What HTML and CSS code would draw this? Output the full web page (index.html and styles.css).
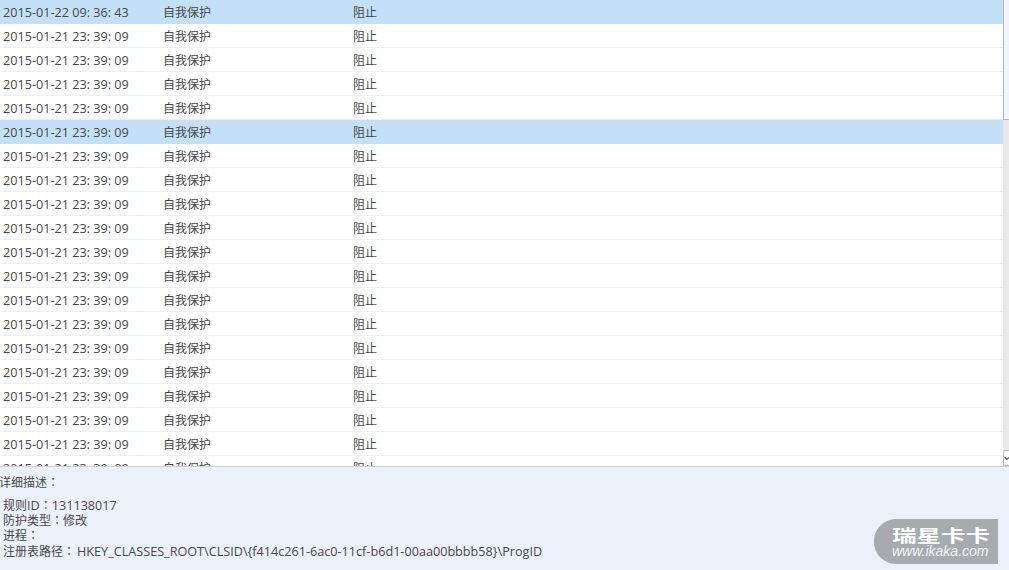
FILE: index.html
```html
<!DOCTYPE html>
<html lang="zh">
<head>
<meta charset="utf-8">
<title>日志</title>
<link rel="stylesheet" href="styles.css">
</head>
<body>
<div class="list-area">
  <div class="rows">
    <div class="row sel"><span class="c-time">2015-01-22 09: 36: 43</span><span class="c-type">自我保护</span><span class="c-act">阻止</span></div>
    <div class="row"><span class="c-time">2015-01-21 23: 39: 09</span><span class="c-type">自我保护</span><span class="c-act">阻止</span></div>
    <div class="row"><span class="c-time">2015-01-21 23: 39: 09</span><span class="c-type">自我保护</span><span class="c-act">阻止</span></div>
    <div class="row"><span class="c-time">2015-01-21 23: 39: 09</span><span class="c-type">自我保护</span><span class="c-act">阻止</span></div>
    <div class="row"><span class="c-time">2015-01-21 23: 39: 09</span><span class="c-type">自我保护</span><span class="c-act">阻止</span></div>
    <div class="row sel"><span class="c-time">2015-01-21 23: 39: 09</span><span class="c-type">自我保护</span><span class="c-act">阻止</span></div>
    <div class="row"><span class="c-time">2015-01-21 23: 39: 09</span><span class="c-type">自我保护</span><span class="c-act">阻止</span></div>
    <div class="row"><span class="c-time">2015-01-21 23: 39: 09</span><span class="c-type">自我保护</span><span class="c-act">阻止</span></div>
    <div class="row"><span class="c-time">2015-01-21 23: 39: 09</span><span class="c-type">自我保护</span><span class="c-act">阻止</span></div>
    <div class="row"><span class="c-time">2015-01-21 23: 39: 09</span><span class="c-type">自我保护</span><span class="c-act">阻止</span></div>
    <div class="row"><span class="c-time">2015-01-21 23: 39: 09</span><span class="c-type">自我保护</span><span class="c-act">阻止</span></div>
    <div class="row"><span class="c-time">2015-01-21 23: 39: 09</span><span class="c-type">自我保护</span><span class="c-act">阻止</span></div>
    <div class="row"><span class="c-time">2015-01-21 23: 39: 09</span><span class="c-type">自我保护</span><span class="c-act">阻止</span></div>
    <div class="row"><span class="c-time">2015-01-21 23: 39: 09</span><span class="c-type">自我保护</span><span class="c-act">阻止</span></div>
    <div class="row"><span class="c-time">2015-01-21 23: 39: 09</span><span class="c-type">自我保护</span><span class="c-act">阻止</span></div>
    <div class="row"><span class="c-time">2015-01-21 23: 39: 09</span><span class="c-type">自我保护</span><span class="c-act">阻止</span></div>
    <div class="row"><span class="c-time">2015-01-21 23: 39: 09</span><span class="c-type">自我保护</span><span class="c-act">阻止</span></div>
    <div class="row"><span class="c-time">2015-01-21 23: 39: 09</span><span class="c-type">自我保护</span><span class="c-act">阻止</span></div>
    <div class="row"><span class="c-time">2015-01-21 23: 39: 09</span><span class="c-type">自我保护</span><span class="c-act">阻止</span></div>
    <div class="row"><span class="c-time">2015-01-21 23: 39: 09</span><span class="c-type">自我保护</span><span class="c-act">阻止</span></div>
  </div>
  <div class="scrollbar">
    <div class="thumb"></div>
    <div class="track"></div>
    <div class="arrow"><svg width="6" height="5" viewBox="0 0 6 5"><path d="M0.5 1 L3 3.5 L5.5 1" fill="none" stroke="#555" stroke-width="1.2"/></svg></div>
  </div>
</div>
<div class="detail">
  <div class="detail-title">详细描述<span class="colon" lang="zh-Hant">：</span></div>
  <div class="detail-body">
    <div>规则<span class="lat">ID</span><span class="colon" lang="zh-Hant">：</span><span class="lat">131138017</span></div>
    <div>防护类型<span class="colon" lang="zh-Hant">：</span>修改</div>
    <div>进程<span class="colon" lang="zh-Hant">：</span></div>
    <div>注册表路径<span class="colon" lang="zh-Hant">：</span><span class="lat path">HKEY_CLASSES_ROOT\CLSID\{f414c261-6ac0-11cf-b6d1-00aa00bbbb58}\ProgID</span></div>
  </div>
  <div class="badge">
    <div class="badge-cn">瑞星卡卡</div>
    <div class="badge-url">www.ikaka.com</div>
  </div>
</div>
</body>
</html>
```
FILE: styles.css
```css
html, body { margin: 0; padding: 0; }
body {
  width: 1009px;
  height: 570px;
  overflow: hidden;
  background: #eaf1fb;
  font-family: "Open Sans", "Noto Sans CJK SC", sans-serif;
  font-size: 12px;
  color: #484848;
}
.list-area {
  display: flex;
  height: 467px;
  background: #fff;
  border-bottom: 1px solid #ccd3dc;
  box-sizing: border-box;
  overflow: hidden;
}
.rows { width: 1003px; flex: none; }
.row {
  display: flex;
  height: 24px;
  line-height: 25px;
  box-sizing: border-box;
  border-bottom: 1px solid #eeeeee;
  padding-left: 3px;
}
.row.sel { background: #c3e0f7; border-bottom-color: #c3e0f7; }
.c-time { width: 160px; flex: none; font-size: 12.65px; }
.c-type { width: 190px; flex: none; }
.c-act { flex: none; }
.scrollbar { flex: 1; display: flex; flex-direction: column; background: #e9e9e9; }
.thumb {
  height: 120px;
  background: #f1f4fc;
  border-left: 1px solid #b5b9bf;
  border-bottom: 1px solid #b5b9bf;
  box-sizing: border-box;
}
.track { flex: 1; }
.arrow {
  height: 16px;
  display: flex;
  align-items: center;
  justify-content: center;
  background: #fff;
  border: 1px solid #b5b9bf;
  border-right: 0;
  box-sizing: border-box;
  border-radius: 2px 0 0 2px;
  overflow: hidden;
}
.arrow svg { flex: none; }
.detail { position: relative; height: 104px; }
.detail-title { padding-top: 8px; line-height: 16px; height: 30.5px; box-sizing: border-box; margin-left: -1px; }
.detail-body { padding-left: 3px; }
.detail-body div { height: 15.4px; line-height: 15.4px; }
.lat { font-size: 12.65px; line-height: 0; }
.path { margin-left: 2px; }
.colon { font-family: "Noto Sans CJK TC", sans-serif; line-height: 0; }
.badge {
  position: absolute;
  left: 874px;
  top: 52px;
  width: 124px;
  height: 45px;
  background: #a7abb0;
  border-radius: 22px 0 0 22px;
  color: #fff;
  overflow: hidden;
}
.badge-cn {
  font-size: 17px;
  line-height: 16px;
  height: 16px;
  font-weight: 700;
  margin-top: 9px;
  margin-left: 18px;
  width: 68px;
  transform: scaleX(1.44);
  transform-origin: left center;
  white-space: nowrap;
}
.badge-url {
  font-family: "Liberation Sans", sans-serif;
  font-size: 14px;
  line-height: 14px;
  font-style: italic;
  margin-left: 18px;
  color: #f2f4f6;
}
```
